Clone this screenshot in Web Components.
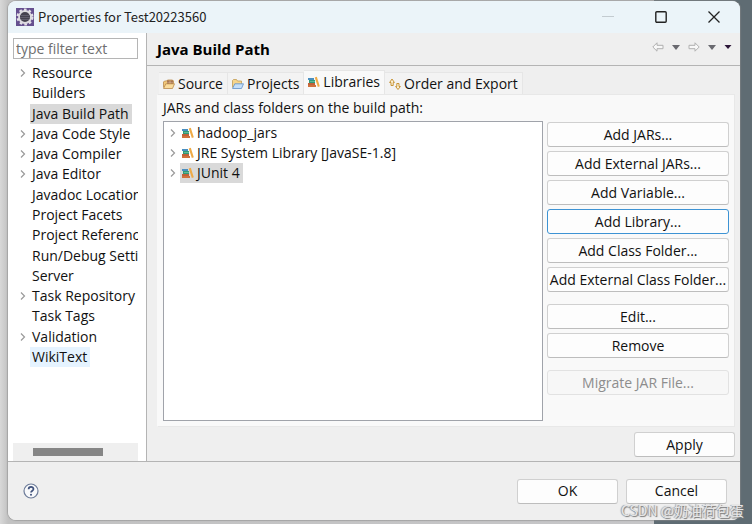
<!DOCTYPE html>
<html lang="en">
<head>
<meta charset="utf-8">
<title>Properties for Test20223560</title>
<style>
  html { height: 100%; }
  body {
    margin: 0; box-sizing: border-box; min-height: 100vh;
    padding: 1px 12px 4px 8px; display: flex; position: relative;
    background: linear-gradient(90deg, #d8d8d8, #c2c2c2 8px, #c6c6c8 87%, #5f6c73 87%, #5f6c73);
    font: 14px/20px "Open Sans", "Noto Sans CJK SC", sans-serif; color: #111;
    --line: #b4b4b4; --face: #efefef;
  }
</style>
</head>
<body>
<properties-dialog></properties-dialog>
<water-mark>CSDN @奶油荷包蛋</water-mark>

<script>
const define = (name, html, setup) => {
  const template = document.createElement('template');
  template.innerHTML = html;
  customElements.define(name, class extends HTMLElement {
    constructor() {
      super();
      this.attachShadow({ mode: 'open' }).append(template.content.cloneNode(true));
    }
    connectedCallback() { if (setup) setup(this, this.shadowRoot); }
  });
};

const icons = {
  books: `<svg width="12" height="12" viewBox="0 0 12 12"><path fill="#4a8fc0" d="M0 2h6v2H0z"/><path fill="#2f9a78" d="M1 4h6v3H1z"/><path fill="#5fb898" d="M2 5h5v1H2z"/><path fill="#c0623a" d="M0 7h7v2H0z"/><path fill="#d0703c" d="M0 9h8v2H0z"/><path fill="#efaa45" d="M6.800 1.500l2-.8 3 9.500-2 .8z"/></svg>`,
  source: `<svg width="12" height="12" viewBox="0 0 12 12"><path fill="#f2c879" stroke="#b98a4c" stroke-width=".8" stroke-linejoin="round" d="M.5 9.500V4l1-1h2l1-1h5l1 1v3"/><path fill="#9a6240" d="M4 2.500h6V6H4z"/><path fill="none" stroke="#ecd0ae" stroke-width=".6" d="M4 4.200h6M7 2.500V6"/><path fill="#fbdc9c" stroke="#b98a4c" stroke-width=".8" stroke-linejoin="round" d="M.6 10.500l2.200-4.700h8.700l-2 4.700z"/></svg>`,
  folder: `<svg width="12" height="12" viewBox="0 0 12 12"><path fill="#f6d58c" stroke="#c29c54" stroke-width=".8" stroke-linejoin="round" d="M.5 9.500V2.500l1-1h3l1 1.500h4V6"/><path fill="#c4dffa" stroke="#5f8fc8" stroke-width=".8" stroke-linejoin="round" d="M.6 10.500l2.200-4.700h8.700l-2 4.700z"/></svg>`,
  order: `<svg width="12" height="12" viewBox="0 0 12 12"><path fill="#fdf3d8" stroke="#c79538" d="M2 4.500H.600L3 1l2.400 3.500H4.200v3H2zM7.800 5.500H10v3h1.400L9 11.500 6.600 8.500h1.200z"/></svg>`,
  back: `<svg width="12" height="10" viewBox="0 0 12 10"><path fill="#f8f8f8" stroke="#b0b0b0" stroke-linejoin="round" d="M.8 5L5 .8v2.500h6v3.400H5v2.500z"/></svg>`,
  forward: `<svg width="12" height="10" viewBox="0 0 12 10"><path fill="#f8f8f8" stroke="#b0b0b0" stroke-linejoin="round" d="M11.200 5L7 .8v2.500H1v3.400h6v2.500z"/></svg>`,
  drop: `<svg width="8" height="5" viewBox="0 0 8 5"><path fill="#69696f" d="M0 0h8L4 5z"/></svg>`,
  menu: `<svg width="8" height="5" viewBox="0 0 8 5"><path fill="#2c1638" d="M.5 0h7L4 4z"/></svg>`,
  chevron: `<svg width="6" height="8" viewBox="0 0 6 8"><path fill="none" stroke="#9a9a9a" stroke-width="1.200" d="M1 .5L4.500 4 1 7.500"/></svg>`,
  minimize: `<svg width="12" height="12" viewBox="0 0 12 12"><path stroke="#c3cbd0" d="M0 5.500h12"/></svg>`,
  maximize: `<svg width="12" height="12" viewBox="0 0 12 12"><rect x=".8" y=".8" width="10.400" height="10.400" rx="1" fill="none" stroke="#222" stroke-width="1.400"/></svg>`,
  close: `<svg width="12" height="12" viewBox="0 0 12 12"><path stroke="#222" stroke-width="1.300" d="M.5.5l11 11M11.500.5l-11 11"/></svg>`,
  help: `<svg width="16" height="16" viewBox="0 0 16 16"><circle cx="8" cy="8" r="7" fill="#f8f9fb" stroke="#6d7c99" stroke-width="1.200"/><path fill="none" stroke="#40527c" stroke-width="1.700" d="M5.600 6.300c0-3.200 4.900-3 4.900-.3 0 1.700-2.500 1.700-2.500 3.600"/><circle cx="8" cy="11.800" r="1" fill="#40527c"/></svg>`,
  gear: `<svg width="18" height="18" viewBox="0 0 18 18"><rect width="18" height="18" fill="#66508f"/><circle cx="9" cy="9" r="7.300" fill="none" stroke="#e4e1e8" stroke-width="2.400" stroke-dasharray="2.600 2.133"/><circle cx="9" cy="9" r="6" fill="#45424e" stroke="#dddbe0" stroke-width="1.800"/><path stroke="#605d6c" d="M4.500 7.500h9M4 9.500h10M5 11.500h8"/></svg>`
};

define('ui-icon', `<style>:host{display:inline-flex;flex:none}svg{display:block}</style><span></span>`,
  (el, root) => { root.querySelector('span').innerHTML = icons[el.getAttribute('name')] || ''; });

define('icon-button', `<style>
  :host{display:flex;flex:none}
  button{display:flex;align-items:center;justify-content:center;border:0;background:none;padding:0;width:100%;min-height:16px}
</style><button type="button"><ui-icon></ui-icon></button>`,
  (el, root) => {
    const icon = root.querySelector('ui-icon');
    icon.setAttribute('name', el.getAttribute('icon'));
    icon.connectedCallback();
    root.querySelector('button').setAttribute('aria-label', el.getAttribute('label'));
  });

define('push-button', `<style>
  :host{display:block}
  button{box-sizing:border-box;width:100%;height:25px;padding:0;border:1px solid #d0d0d0;border-bottom-color:#bdbdbd;
    border-radius:3px;background:#fdfdfd;color:inherit;font:inherit;line-height:20px;white-space:nowrap;display:flex;justify-content:center;align-items:center}
  :host([primary]) button{border-color:#3d93d4}
  button:disabled{color:#8d8d8d;background:#f7f7f7;border-color:#e2e2e2}
</style><button type="button"><slot></slot></button>`,
  (el, root) => { root.querySelector('button').disabled = el.hasAttribute('disabled'); });

define('title-bar', `<style>
  :host{display:flex;align-items:center;height:32px;padding-left:8px;background:#ebf4f9;color:#222}
  h1{flex:1;margin:0 0 0 4px;font:13px/20px "Noto Sans CJK SC",sans-serif}
  icon-button{width:53px}
</style><ui-icon name="gear"></ui-icon><h1><slot></slot></h1>
<icon-button icon="minimize" label="Minimize"></icon-button><icon-button icon="maximize" label="Maximize"></icon-button><icon-button icon="close" label="Close"></icon-button>`);

define('tree-item', `<style>
  :host{display:flex;align-items:center;white-space:nowrap;min-height:20px}
  .arrow{width:10px;flex:none;display:flex}
  :host(:not([branch])) .arrow{visibility:hidden}
  .label{display:flex;align-items:center;gap:3px;padding:0 3px 0 2px}
  :host([selected]) .label{background:#d9d9d9}
  :host([hot]) .label{background:#e5f3ff}
</style><span class="arrow"><ui-icon name="chevron"></ui-icon></span><span class="label"><slot name="icon"></slot><span><slot></slot></span></span>`,
  el => { el.setAttribute('role', 'treeitem'); });

define('category-pane', `<style>
  :host{display:flex;flex-direction:column;box-sizing:border-box;min-width:0;background:#fff;padding:5px 8px 0 5px;border-right:1px solid var(--line)}
  input{box-sizing:border-box;width:100%;height:21px;border:1px solid #b5b5b5;padding:0 2px;font:inherit;color:#333;outline:0;margin-bottom:4px}
  input::placeholder{color:#6f6f6f;opacity:1}
  .tree{flex:1;overflow:hidden;padding-left:7px}
  .rows{display:grid;grid-auto-rows:1fr;height:304px}
  .bar{height:18px;background:var(--face);display:flex;align-items:center;padding-left:20px}
  .thumb{width:70px;height:8px;background:#868686}
</style>
<input type="text" placeholder="type filter text" aria-label="Filter categories">
<div class="tree" role="tree"><div class="rows"><slot></slot></div></div>
<div class="bar"><div class="thumb"></div></div>`);

define('page-header', `<style>
  :host{display:flex;align-items:center;height:32px;padding:0 8px 0 10px;border-bottom:1px solid var(--line)}
  h2{flex:1;margin:0;font:bold 15px/20px "Open Sans",sans-serif;color:#000}
  nav{display:flex;gap:8px;padding-bottom:4px}
</style><h2><slot></slot></h2>
<nav><icon-button icon="back" label="Back"></icon-button><icon-button icon="drop" label="Back history"></icon-button><icon-button icon="forward" label="Forward"></icon-button><icon-button icon="drop" label="Forward history"></icon-button><icon-button icon="menu" label="Menu"></icon-button></nav>`);

define('page-tab', `<style>
  :host{display:block}
  button{display:flex;align-items:center;gap:3px;height:22px;padding:0 4px;border:1px solid #e6e6e6;border-width:1px 1px 0 0;background:#f3f3f3;font:inherit;color:inherit;white-space:nowrap}
  :host([selected]) button{height:24px;background:#f9f9f9;padding-bottom:2px}
</style><button type="button" role="tab"><slot name="icon"></slot><span><slot></slot></span></button>`,
  (el, root) => { root.querySelector('button').setAttribute('aria-selected', el.hasAttribute('selected')); });

define('build-path-page', `<style>
  :host{display:flex;flex-direction:column;min-width:0;background:var(--face)}
  .content{flex:1;display:flex;flex-direction:column;padding:4px 5px 4px 10px}
  .tabs{display:flex;align-items:flex-end;padding-left:2px}
  .panel{flex:1;display:grid;grid-template-columns:minmax(0,1fr) 182px;grid-template-rows:26px 1fr;column-gap:4px;background:#f9f9f9;border:1px solid #e8e8e8;border-left-color:#f9f9f9;padding:0 5px 5px}
  .caption{grid-column:1/3;line-height:26px}
  .list{background:#fff;border:1px solid #a0a3aa;padding:1px 0 0 6px}
  .list tree-item{height:20px}
  .actions{display:grid;gap:4px;align-content:start;padding-top:1px}
  .gap{margin-top:8px}
  .apply{display:flex;justify-content:flex-end;margin-top:5px}
  .apply push-button{width:101px}
</style>
<page-header>Java Build Path</page-header>
<div class="content">
  <div class="tabs" role="tablist">
    <page-tab><ui-icon slot="icon" name="source"></ui-icon>Source</page-tab>
    <page-tab><ui-icon slot="icon" name="folder"></ui-icon>Projects</page-tab>
    <page-tab selected><ui-icon slot="icon" name="books"></ui-icon>Libraries</page-tab>
    <page-tab><ui-icon slot="icon" name="order"></ui-icon>Order and Export</page-tab>
  </div>
  <div class="panel" role="tabpanel">
    <div class="caption">JARs and class folders on the build path:</div>
    <div class="list" role="tree">
      <tree-item branch><ui-icon slot="icon" name="books"></ui-icon>hadoop_jars</tree-item>
      <tree-item branch><ui-icon slot="icon" name="books"></ui-icon>JRE System Library [JavaSE-1.8]</tree-item>
      <tree-item branch selected><ui-icon slot="icon" name="books"></ui-icon>JUnit 4</tree-item>
    </div>
    <div class="actions">
      <push-button>Add JARs...</push-button>
      <push-button>Add External JARs...</push-button>
      <push-button>Add Variable...</push-button>
      <push-button primary>Add Library...</push-button>
      <push-button>Add Class Folder...</push-button>
      <push-button>Add External Class Folder...</push-button>
      <push-button class="gap">Edit...</push-button>
      <push-button>Remove</push-button>
      <push-button class="gap" disabled>Migrate JAR File...</push-button>
    </div>
  </div>
  <div class="apply"><push-button>Apply</push-button></div>
</div>`);

define('dialog-footer', `<style>
  :host{display:flex;align-items:center;gap:8px;height:58px;padding:0 13px 0 15px;background:var(--face);border-top:1px solid var(--line)}
  icon-button{margin-right:auto}
  push-button{width:101px}
</style><icon-button icon="help" label="Help"></icon-button><push-button>OK</push-button><push-button>Cancel</push-button>`);

define('properties-dialog', `<style>
  :host{flex:1;min-width:0;display:flex;flex-direction:column;overflow:hidden;border-radius:8px;background:var(--face);box-shadow:0 0 1px 1px #8888}
  .main{flex:1;display:grid;grid-template-columns:139px minmax(0,1fr)}
</style>
<title-bar>Properties for Test20223560</title-bar>
<div class="main">
  <category-pane>
    <tree-item branch>Resource</tree-item>
    <tree-item>Builders</tree-item>
    <tree-item selected>Java Build Path</tree-item>
    <tree-item branch>Java Code Style</tree-item>
    <tree-item branch>Java Compiler</tree-item>
    <tree-item branch>Java Editor</tree-item>
    <tree-item>Javadoc Location</tree-item>
    <tree-item>Project Facets</tree-item>
    <tree-item>Project References</tree-item>
    <tree-item>Run/Debug Settings</tree-item>
    <tree-item>Server</tree-item>
    <tree-item branch>Task Repository</tree-item>
    <tree-item>Task Tags</tree-item>
    <tree-item branch>Validation</tree-item>
    <tree-item hot>WikiText</tree-item>
  </category-pane>
  <build-path-page></build-path-page>
</div>
<dialog-footer></dialog-footer>`);

define('water-mark', `<style>
  :host{position:absolute;right:8px;bottom:3px;font:14px/22px "Noto Sans CJK SC",sans-serif;color:#e6e6e6;text-shadow:1px 1px 1px #777,-1px 0 1px #999;pointer-events:none}
</style><slot></slot>`);
</script>
</body>
</html>
